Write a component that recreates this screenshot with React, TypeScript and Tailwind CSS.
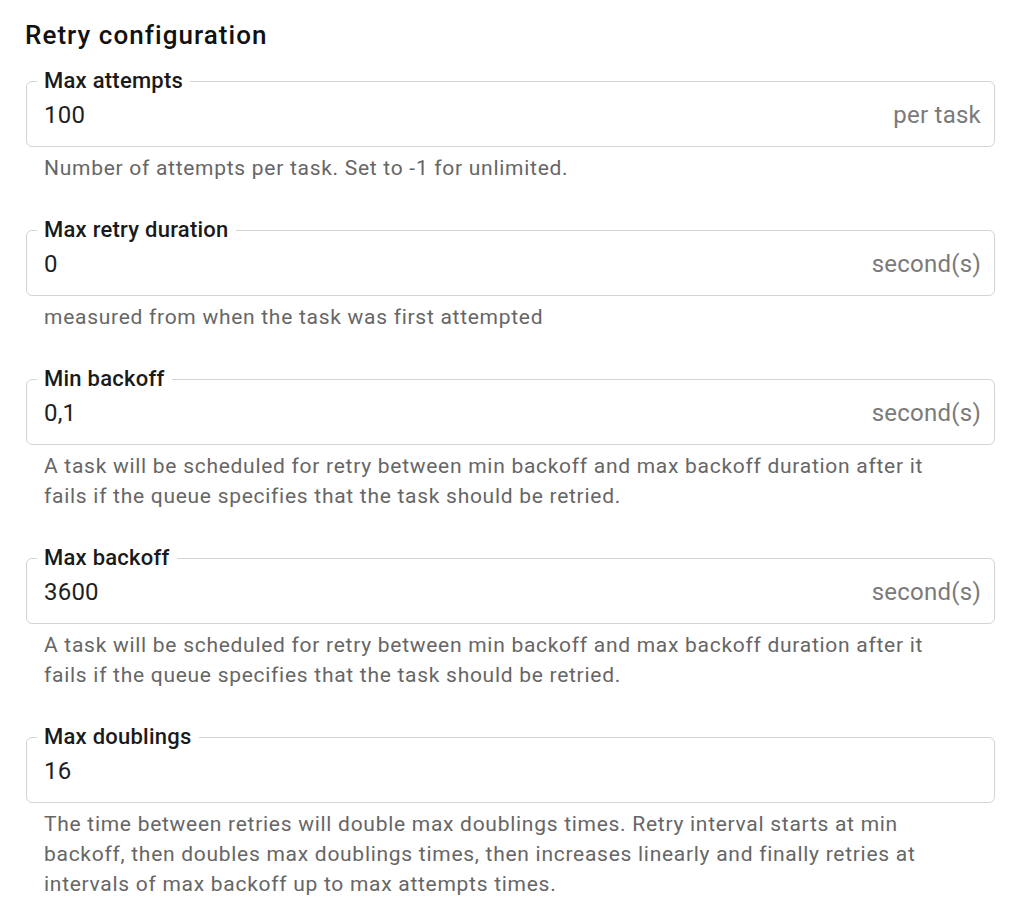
import React from "react";

type Field = {
  label: string;
  value: string;
  suffix?: string;
  help: string[];
};

const fields: Field[] = [
  {
    label: "Max attempts",
    value: "100",
    suffix: "per task",
    help: ["Number of attempts per task. Set to -1 for unlimited."],
  },
  {
    label: "Max retry duration",
    value: "0",
    suffix: "second(s)",
    help: ["measured from when the task was first attempted"],
  },
  {
    label: "Min backoff",
    value: "0,1",
    suffix: "second(s)",
    help: [
      "A task will be scheduled for retry between min backoff and max backoff duration after it",
      "fails if the queue specifies that the task should be retried.",
    ],
  },
  {
    label: "Max backoff",
    value: "3600",
    suffix: "second(s)",
    help: [
      "A task will be scheduled for retry between min backoff and max backoff duration after it",
      "fails if the queue specifies that the task should be retried.",
    ],
  },
  {
    label: "Max doublings",
    value: "16",
    help: [
      "The time between retries will double max doublings times. Retry interval starts at min",
      "backoff, then doubles max doublings times, then increases linearly and finally retries at",
      "intervals of max backoff up to max attempts times.",
    ],
  },
];

function OutlinedField({ f }: { f: Field }) {
  return (
    <div className="mt-[47px] first:mt-[30px]">
      <div className="relative flex h-[66px] w-[969px] items-center rounded-[6px] border border-[#d4d4d4] pl-[17px] pr-[13px]">
        <span className="absolute -top-[14px] left-[10px] bg-white px-[7px] text-[22px] font-medium leading-[26px] tracking-[0.25px] text-[#1a1a1a]">
          {f.label}
        </span>
        <span className="flex-1 pt-[1px] text-[24px] leading-[30px] tracking-[0.2px] text-[#1f1f1f]">
          {f.value}
        </span>
        {f.suffix && (
          <span className="pt-[1px] text-[24px] leading-[30px] tracking-[0.25px] text-[#7a7a7a]">
            {f.suffix}
          </span>
        )}
      </div>
      <div className="mt-[6px] pl-[18px] text-[21px] leading-[30px] tracking-[0.72px] text-[#666666]">
        {f.help.map((line, i) => (
          <div key={i} className="whitespace-nowrap">
            {line}
          </div>
        ))}
      </div>
    </div>
  );
}

export default function App() {
  return (
    <div
      className="min-h-[924px] w-[1024px] bg-white pl-[26px] pt-[19px]"
      style={{ fontFamily: "Roboto, 'Liberation Sans', sans-serif" }}
    >
      <h2 className="-ml-[1px] text-[26px] font-medium leading-[32px] tracking-[1.05px] text-[#111111]">
        Retry configuration
      </h2>
      <div className="flex flex-col">
        {fields.map((f) => (
          <OutlinedField key={f.label} f={f} />
        ))}
      </div>
    </div>
  );
}
